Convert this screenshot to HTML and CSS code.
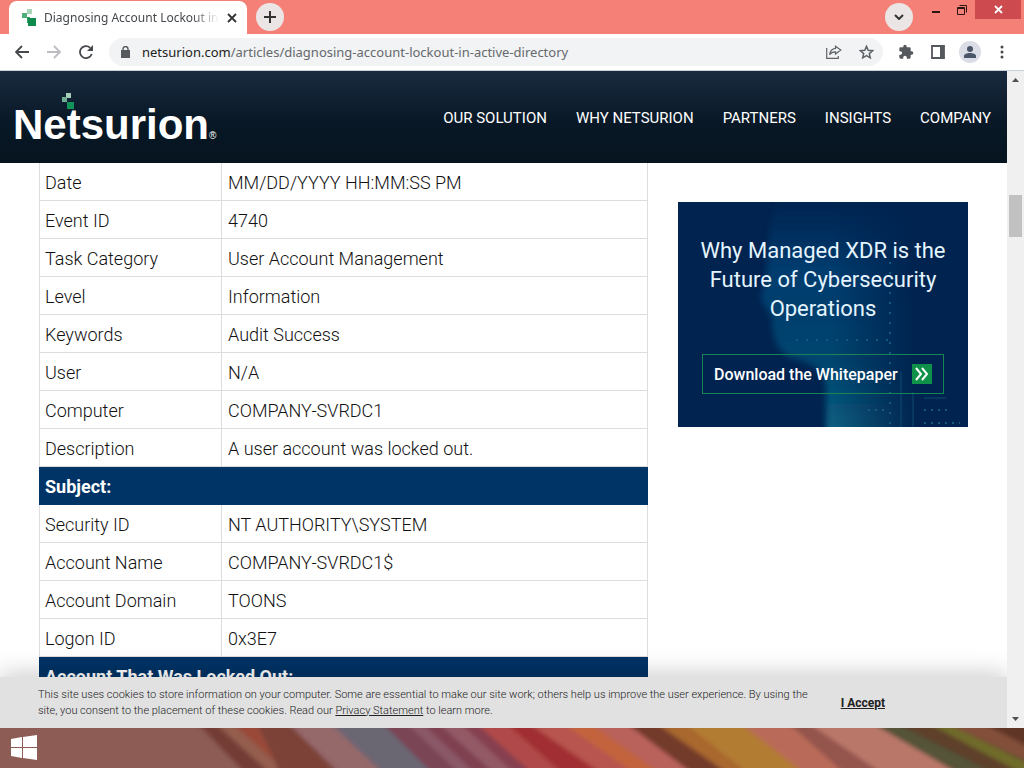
FILE: index.html
```html
<!DOCTYPE html>
<html lang="en">
<head>
    <meta charset="UTF-8">
    <meta name="viewport" content="width=device-width, initial-scale=1.0">
    <title>Diagnosing Account Lockout in Active Directory</title>
    <link rel="stylesheet" href="styles.css">
</head>
<body>
    <!-- Tab strip -->
    <div class="tab-strip">
        <div class="tab">
            <svg class="favicon" width="16" height="18" viewBox="0 0 16 18">
                <path fill="#a8d5b8" d="M5 0h5v5H5z"/>
                <path fill="#4fb07b" d="M0 4h5v5H0z"/>
                <path fill="#2b9c62" d="M5 8h3v6H5z"/>
                <path fill="#0d8a4c" d="M6 9h8v8H6z"/>
            </svg>
            <span class="tab-title">Diagnosing Account Lockout in Active Directory</span>
            <button class="icon-btn" aria-label="Close tab">
                <svg width="10" height="10" viewBox="0 0 10 10"><path d="M1 1l8 8M9 1L1 9" stroke="#333" stroke-width="1.8"/></svg>
            </button>
        </div>
        <button class="round-btn" aria-label="New tab">
            <svg width="12" height="12" viewBox="0 0 12 12"><path d="M6 0v12M0 6h12" stroke="#333" stroke-width="2"/></svg>
        </button>
        <div class="window-controls">
            <button class="round-btn" aria-label="Search tabs">
                <svg width="10" height="6" viewBox="0 0 10 6"><path d="M1 1l4 4 4-4" fill="none" stroke="#333" stroke-width="2"/></svg>
            </button>
            <button class="win-btn" aria-label="Minimize">
                <svg width="10" height="10" viewBox="0 0 10 10"><path d="M1 7h8" stroke="#2b1513" stroke-width="2"/></svg>
            </button>
            <button class="win-btn" aria-label="Restore">
                <svg width="10" height="10" viewBox="0 0 10 10"><path d="M2.500.500h7v7M.500 2.500h7v7h-7zM.500 3.500h7" fill="none" stroke="#2b1513"/></svg>
            </button>
            <button class="win-btn win-close" aria-label="Close">
                <svg width="9" height="9" viewBox="0 0 9 9"><path d="M1 1l7 7M8 1L1 8" stroke="#fff" stroke-width="1.800"/></svg>
            </button>
        </div>
    </div>

    <!-- Address bar -->
    <div class="toolbar">
        <button class="icon-btn" aria-label="Back">
            <svg width="14" height="14" viewBox="0 0 14 14"><path d="M14 7H1.500M7 1L1 7l6 6" fill="none" stroke="#45484c" stroke-width="1.800"/></svg>
        </button>
        <button class="icon-btn" aria-label="Forward">
            <svg width="14" height="14" viewBox="0 0 14 14"><path d="M0 7h12.500M7 1l6 6-6 6" fill="none" stroke="#bbbdc0" stroke-width="1.800"/></svg>
        </button>
        <button class="icon-btn" aria-label="Reload">
            <svg width="14" height="14" viewBox="0 0 14 14"><path d="M12.700 9A6 6 0 1 1 11.200 2.800" fill="none" stroke="#45484c" stroke-width="1.800"/><path d="M14 0v6H8z" fill="#45484c"/></svg>
        </button>
        <div class="address">
            <svg width="9" height="12" viewBox="0 0 9 12"><path d="M0 4h9v8H0z" fill="#55585c"/><path d="M2 5V3a2.500 2.500 0 0 1 5 0v2" fill="none" stroke="#55585c" stroke-width="1.400"/></svg>
            <span class="url"><b>netsurion.com</b>/articles/diagnosing-account-lockout-in-active-directory</span>
            <button class="icon-btn" aria-label="Share">
                <svg width="16" height="14" viewBox="0 0 16 14"><path d="M.7 3v10.300h11.600V11M9.500 1.200L14.800 5 9.500 9V6.800C7 6.700 5 7.500 3.600 9.800 4 6.400 6 3.800 9.500 3.400z" fill="none" stroke="#5f6368" stroke-width="1.200"/></svg>
            </button>
            <button class="icon-btn" aria-label="Bookmark">
                <svg width="15" height="14" viewBox="0 0 15 14"><path d="M7.500 1.300l1.700 4 4.400.4-3.300 2.900 1 4.200-3.800-2.200-3.800 2.200 1-4.200L1.400 5.700l4.400-.4z" fill="none" stroke="#5f6368" stroke-width="1.500"/></svg>
            </button>
        </div>
        <button class="icon-btn" aria-label="Extensions">
            <svg width="16" height="16" viewBox="0 0 24 24"><path fill="#55585c" d="M20.500 11H19V7a2 2 0 0 0-2-2h-4V3.500a2.500 2.500 0 0 0-5 0V5H4a2 2 0 0 0-2 2v3.800h1.500a2.700 2.700 0 0 1 0 5.400H2V20a2 2 0 0 0 2 2h3.800v-1.500a2.700 2.700 0 0 1 5.400 0V22H17a2 2 0 0 0 2-2v-4h1.500a2.500 2.500 0 0 0 0-5z"/></svg>
        </button>
        <button class="icon-btn" aria-label="Side panel">
            <svg width="14" height="14" viewBox="0 0 14 14"><path d="M1 1h12v12H1z" fill="none" stroke="#55585c" stroke-width="1.800"/><path d="M9 1h4v12H9z" fill="#55585c"/></svg>
        </button>
        <button class="icon-btn avatar" aria-label="Profile">
            <svg width="12" height="12" viewBox="0 0 12 12"><circle cx="6" cy="3" r="3" fill="#4a5568"/><path d="M0 12V10c0-4 12-4 12 0v2z" fill="#4a5568"/></svg>
        </button>
        <button class="icon-btn" aria-label="Menu">
            <svg width="4" height="14" viewBox="0 0 4 14"><g fill="#45484c"><circle cx="2" cy="2" r="1.500"/><circle cx="2" cy="7" r="1.500"/><circle cx="2" cy="12" r="1.500"/></g></svg>
        </button>
    </div>

    <div class="viewport">
        <div class="page">
            <header class="site-header">
                <a class="logo" href="#">
                    <span class="logo-text">Netsurion</span><span class="logo-reg">®</span>
                    <svg class="logo-mark" width="12" height="16" viewBox="0 0 12 16">
                        <path fill="#a5cdb8" d="M4 0h5v5H4z"/>
                        <path fill="#6fae91" d="M0 4h5v5H0z"/>
                        <path fill="#11945a" d="M5 9h7v7H5z"/>
                    </svg>
                </a>
                <nav class="site-nav">
                    <a href="#">OUR SOLUTION</a>
                    <a href="#">WHY NETSURION</a>
                    <a href="#">PARTNERS</a>
                    <a href="#">INSIGHTS</a>
                    <a href="#">COMPANY</a>
                </nav>
            </header>

            <main class="content">
                <table class="event-table">
                    <tbody>
                        <tr><td>Date</td><td>MM/DD/YYYY HH:MM:SS PM</td></tr>
                        <tr><td>Event ID</td><td>4740</td></tr>
                        <tr><td>Task Category</td><td>User Account Management</td></tr>
                        <tr><td>Level</td><td>Information</td></tr>
                        <tr><td>Keywords</td><td>Audit Success</td></tr>
                        <tr><td>User</td><td>N/A</td></tr>
                        <tr><td>Computer</td><td>COMPANY-SVRDC1</td></tr>
                        <tr><td>Description</td><td>A user account was locked out.</td></tr>
                        <tr><th colspan="2">Subject:</th></tr>
                        <tr><td>Security ID</td><td>NT AUTHORITY\SYSTEM</td></tr>
                        <tr><td>Account Name</td><td>COMPANY-SVRDC1$</td></tr>
                        <tr><td>Account Domain</td><td>TOONS</td></tr>
                        <tr><td>Logon ID</td><td>0x3E7</td></tr>
                        <tr><th colspan="2">Account That Was Locked Out:</th></tr>
                    </tbody>
                </table>

                <aside class="promo">
                    <svg class="promo-art" viewBox="0 0 290 225" preserveAspectRatio="none">
                        <defs>
                            <linearGradient id="face" x1="0" y1="0" x2="0" y2="1">
                                <stop offset="0" stop-color="#053a70" stop-opacity="0"/>
                                <stop offset="0.3" stop-color="#064276" stop-opacity="0.8"/>
                                <stop offset="0.7" stop-color="#05466f"/>
                                <stop offset="1" stop-color="#086384"/>
                            </linearGradient>
                            <linearGradient id="fade">
                                <stop offset="0.35" stop-color="#00234f" stop-opacity="0"/>
                                <stop offset="0.75" stop-color="#00234f"/>
                            </linearGradient>
                            <filter id="haze"><feGaussianBlur stdDeviation="3"/></filter>
                        </defs>
                        <path d="M100 -6C84 42 94 62 84 90c-5 14 10 16 10 28 0 14 4 32 20 38 20 6 34 10 34 34v45h110V-6z" fill="url(#face)" filter="url(#haze)"/>
                        <path d="M80 0h210v225H80z" fill="url(#fade)"/>
                        <path d="M212 60v165M118 138h94" fill="none" stroke="#15587f" stroke-dasharray="2 8" stroke-width="2"/>
                        <path d="M246 208h28M190 208h18M246 221h36" fill="none" stroke="#15587f" stroke-dasharray="2 5" stroke-width="2"/>
                        <path d="M223 170v55M235 190v35M246 196h22" fill="none" stroke="#0f4a73"/>
                    </svg>
                    <h2>Why Managed XDR is the Future of Cybersecurity Operations</h2>
                    <a class="promo-btn" href="#">
                        <span>Download the Whitepaper</span>
                        <svg width="20" height="20" viewBox="0 0 20 20"><path fill="#0f9149" d="M0 0h20v20H0z"/><path d="M4 4l5 6-5 6M10 4l5 6-5 6" fill="none" stroke="#fff" stroke-width="2"/></svg>
                    </a>
                </aside>
            </main>

            <div class="cookie-bar">
                <p>This site uses cookies to store information on your computer. Some are essential to make our site work; others help us improve the user experience. By using the site, you consent to the placement of these cookies. Read our <a href="#">Privacy Statement</a> to learn more.</p>
                <button class="accept">I Accept</button>
            </div>
        </div>

        <div class="scrollbar">
            <svg width="7" height="4" viewBox="0 0 7 4"><path d="M0 4l3.500-4L7 4z" fill="#505050"/></svg>
            <div class="thumb"></div>
            <svg width="7" height="4" viewBox="0 0 7 4"><path d="M0 0l3.500 4L7 0z" fill="#505050"/></svg>
        </div>
    </div>

    <!-- Desktop taskbar -->
    <div class="taskbar">
        <svg class="wallpaper" viewBox="0 0 1024 40" preserveAspectRatio="none">
            <defs>
                <filter id="soft" x="0" y="0" width="1" height="1"><feGaussianBlur stdDeviation="2"/></filter>
            </defs>
            <path fill="#8c5b54" d="M0 0h1024v40H0z"/>
            <g filter="url(#soft)">
                <path fill="#8c5b54" d="M-10 -5h1050v50H-10z"/>
                <path fill="#733c35" d="M197 -5h18l55 50h-25z"/>
                <path fill="#945d4e" d="M215 -5h30l50 50h-25z"/>
                <path fill="#9a4a38" d="M232 -5h28l36 50h-8z"/>
                <path fill="#7c4338" d="M257 -5h35l50 50h-62z"/>
                <path fill="#95686a" d="M288 -5h43l53 50h-45z"/>
                <path fill="#6a6672" d="M330 -5h55l50 50h-52z"/>
                <path fill="#7a4455" d="M382 -5h26l52 50h-28z"/>
                <path fill="#8a5868" d="M406 -5h17l53 50h-17z"/>
                <path fill="#7f4050" d="M422 -5h17l56 50h-20z"/>
                <path fill="#935a66" d="M438 -5h24l54 50h-22z"/>
                <path fill="#864050" d="M460 -5h20l54 50h-20z"/>
                <path fill="#b04a48" d="M476 -5h32l54 50h-30z"/>
                <path fill="#a02e30" d="M506 -5h24l74 50h-42z"/>
                <path fill="#b85450" d="M528 -5h37l72 50h-36z"/>
                <path fill="#c2643c" d="M562 -5h30l74 50h-32z"/>
                <path fill="#b9625c" d="M590 -5h40l66 50h-36z"/>
                <path fill="#733b2b" d="M626 -5h30l74 50h-38z"/>
                <path fill="#a8672f" d="M656 -5h44l52 50h-25z"/>
                <path fill="#b27c32" d="M684 -5h56l66 50h-58z"/>
                <path fill="#ba6a58" d="M740 -5h50l56 50h-42z"/>
                <path fill="#94554d" d="M788 -5h20l76 50h-40z"/>
                <path fill="#b97769" d="M808 -5h64l86 50h-76z"/>
                <path fill="#545239" d="M872 -5h170v50h-84z"/>
                <path fill="#5e3f2b" d="M896 -5h150v50h-52z"/>
                <path fill="#6f6c2c" d="M928 -5h18l90 44v14z"/>
                <path fill="#834f3b" d="M946 -5h94v44z"/>
                <path fill="#5f3426" d="M982 -5h50v26z"/>
            </g>
        </svg>
        <button class="start" aria-label="Start">
            <svg width="26" height="26" viewBox="0 0 26 26"><path fill="#fff" d="M0 4l11-2v10H0zM12 2l14-2v12H12zM0 13h11v10L0 21zM12 13h14v12l-14-2z"/></svg>
        </button>
    </div>
</body>
</html>
```
FILE: styles.css
```css
:root {
    --chrome: #f58078;
    --navy: #003366;
    --line: #dddddd;
}

* {
    box-sizing: border-box;
}

body {
    margin: 0;
    height: 100vh;
    display: flex;
    flex-direction: column;
    overflow: hidden;
    font-family: Roboto, "Liberation Sans", sans-serif;
    color: #111;
}

button {
    border: none;
    padding: 0;
    background: none;
    cursor: pointer;
    font-family: inherit;
}

svg {
    display: block;
    flex-shrink: 0;
}

/* browser tabs */
.tab-strip {
    display: flex;
    align-items: center;
    height: 34px;
    padding-left: 9px;
    background-color: var(--chrome);
}

.tab {
    align-self: flex-end;
    display: flex;
    align-items: center;
    width: 238px;
    height: 33px;
    padding: 0 6px 0 13px;
    background-color: #fff;
    border-radius: 8px 8px 0 0;
}

.tab-title {
    flex: 1;
    margin: 0 4px 0 6px;
    overflow: hidden;
    white-space: nowrap;
    font-family: "Noto Sans", sans-serif;
    font-size: 12px;
    color: #45484c;
    mask-image: linear-gradient(to right, #000 85%, transparent);
}

.icon-btn {
    display: flex;
    align-items: center;
    justify-content: center;
    width: 18px;
    height: 18px;
}

.round-btn {
    display: flex;
    align-items: center;
    justify-content: center;
    width: 28px;
    height: 28px;
    margin-left: 9px;
    border-radius: 50%;
    background-color: #ebe6e5;
}

.window-controls {
    align-self: stretch;
    display: flex;
    align-items: center;
    margin-left: auto;
    padding-right: 3px;
}

.window-controls .round-btn {
    margin-right: 10px;
}

.win-btn {
    align-self: flex-start;
    display: flex;
    align-items: center;
    justify-content: center;
    width: 26px;
    height: 19px;
}

.win-close {
    width: 46px;
    background-color: #cd4a4e;
}

/* address bar */
.toolbar {
    display: flex;
    align-items: center;
    gap: 14px;
    height: 37px;
    padding: 0 13px;
    background-color: #fff;
    border-bottom: 1px solid #c9d0d6;
}

.address {
    flex: 1;
    display: flex;
    align-items: center;
    gap: 14px;
    height: 28px;
    padding: 0 8px 0 12px;
    border-radius: 14px;
    background-color: #f1f3f4;
}

.url {
    flex: 1;
    margin-left: -2px;
    font-family: "Noto Sans", sans-serif;
    font-size: 13px;
    white-space: nowrap;
    color: #66696d;
}

.url b {
    font-weight: 400;
    color: #222;
}

.avatar {
    width: 22px;
    height: 22px;
    margin: 0 -2px;
    border-radius: 50%;
    background-color: #dadde5;
}

/* page area */
.viewport {
    flex: 1;
    min-height: 0;
    display: flex;
}

.page {
    position: relative;
    flex: 1;
    overflow: hidden;
    background-color: #fff;
}

.site-header {
    display: flex;
    align-items: center;
    justify-content: space-between;
    height: 92px;
    padding: 0 16px 0 13px;
    background: linear-gradient(#1a2b3f, #081826 55%, #06141f);
}

.logo {
    position: relative;
    display: flex;
    align-items: baseline;
    margin-top: 16px;
    color: #fff;
    text-decoration: none;
    font-family: "Liberation Sans", sans-serif;
}

.logo-text {
    font-size: 42px;
    line-height: 48px;
    font-weight: 700;
}

.logo-reg {
    font-size: 10px;
}

.logo-mark {
    position: absolute;
    left: 49px;
    top: -8px;
}

.site-nav {
    display: flex;
    gap: 29px;
    padding-top: 2px;
}

.site-nav a {
    font-size: 15px;
    line-height: 20px;
    color: #fff;
    text-decoration: none;
}

.content {
    display: grid;
    grid-template-columns: minmax(0, 1fr) 290px;
    align-items: start;
    gap: 30px;
    padding: 0 39px;
}

.event-table {
    width: 100%;
    table-layout: fixed;
    border-collapse: collapse;
    font-size: 18px;
    line-height: 24px;
}

.event-table td,
.event-table th {
    height: 38px;
    padding: 3px 6px 0;
    border: 1px solid var(--line);
    text-align: left;
}

.event-table td {
    font-weight: 300;
}

.event-table tr:first-child td {
    height: 37px;
    border-top: none;
}

.event-table td:first-child,
.event-table th {
    padding-left: 5px;
}

.event-table td:first-child {
    width: 182px;
}

.event-table th {
    background-color: var(--navy);
    border-color: var(--navy);
    color: #fff;
    font-weight: 700;
}

/* sidebar promo */
.promo {
    position: relative;
    margin-top: 39px;
    padding: 34px 20px 33px;
    background-color: #00234f;
    text-align: center;
    color: #e4f4ff;
}

.promo-art {
    position: absolute;
    inset: 0;
    width: 100%;
    height: 100%;
}

.promo h2 {
    position: relative;
    margin: 0 0 31px;
    font-size: 22px;
    line-height: 29px;
    font-weight: 400;
}

.promo-btn {
    position: relative;
    display: flex;
    align-items: center;
    justify-content: space-between;
    height: 40px;
    margin: 0 4px;
    padding: 0 11px;
    border: 1px solid #168553;
    color: #fff;
    font-size: 16px;
    font-weight: 500;
    text-decoration: none;
}

/* cookie notice */
.cookie-bar {
    position: absolute;
    left: 0;
    right: 0;
    bottom: 0;
    display: flex;
    align-items: center;
    gap: 24px;
    height: 51px;
    padding: 0 122px 0 38px;
    background-color: #e1e1e1;
    box-shadow: 0 -4px 24px rgba(0, 0, 0, 0.2);
    font-size: 11px;
    line-height: 16px;
    color: #222;
}

.cookie-bar p {
    flex: 1;
    margin: 0;
    font-weight: 300;
}

.cookie-bar a {
    color: inherit;
}

.accept {
    font-size: 12px;
    line-height: 16px;
    font-weight: 700;
    text-decoration: underline;
    color: #222;
}

.scrollbar {
    display: flex;
    flex-direction: column;
    align-items: center;
    width: 17px;
    padding: 7px 0;
    background-color: #f0f0f0;
}

.thumb {
    width: 13px;
    height: 42px;
    margin-top: 113px;
    margin-bottom: auto;
    background-color: #c1c1c1;
}

/* taskbar */
.taskbar {
    position: relative;
    display: flex;
    align-items: center;
    height: 40px;
    padding-left: 11px;
}

.wallpaper {
    position: absolute;
    inset: 0;
    width: 100%;
    height: 100%;
}

.start {
    position: relative;
}
```
